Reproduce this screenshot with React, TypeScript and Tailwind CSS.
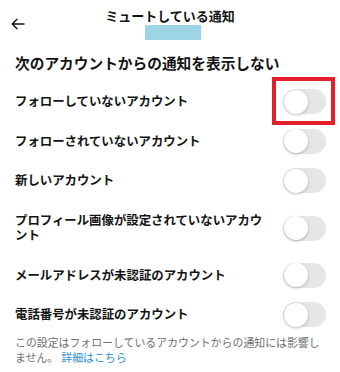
import React, { useState } from "react";

const rows = [
  "フォローしていないアカウント",
  "フォローされていないアカウント",
  "新しいアカウント",
  "プロフィール画像が設定されていないアカウント",
  "メールアドレスが未認証のアカウント",
  "電話番号が未認証のアカウント",
];

function Toggle({ on, onClick }: { on: boolean; onClick: () => void }) {
  return (
    <button
      type="button"
      onClick={onClick}
      className={`relative w-[43px] h-[25px] -my-[5px] shrink-0 rounded-full transition ${on ? "bg-[#1d9bf0]" : "bg-[#e6e6e9]"}`}
    >
      <span
        className={`absolute top-[0.5px] left-[0.5px] w-[24px] h-[24px] rounded-full bg-white shadow-[0_1px_3px_rgba(0,0,0,0.25)] transition ${on ? "translate-x-[18px]" : ""}`}
      />
    </button>
  );
}

export default function App() {
  const [state, setState] = useState<boolean[]>(rows.map(() => false));

  return (
    <main
      className="relative w-[340px] h-[372px] bg-white overflow-hidden text-[#141414]"
      style={{ fontFamily: '"Noto Sans CJK JP", "Noto Sans", sans-serif' }}
    >
      {/* header */}
      <header className="flex items-center pt-2 px-[11px]">
        <svg width="14" height="12" viewBox="0 0 14 12" fill="none" stroke="#111" strokeWidth={1.4} strokeLinecap="round" strokeLinejoin="round" className="shrink-0">
          <path d="M13 6H1.5M6 1.2L1.2 6L6 10.8" />
        </svg>
        <div className="flex-1 flex flex-col items-center pr-[14px]">
          <h1 className="text-[13px] leading-[16px] font-bold">ミュートしている通知</h1>
          <div className="w-[56px] h-[15px] bg-[#9dd5e7] mt-[1px] ml-[6px]" />
        </div>
      </header>

      <h2 className="px-[15px] mt-[13px] text-[14.7px] leading-[20px] font-bold">次のアカウントからの通知を表示しない</h2>

      <ul className="mt-[9px]">
        {rows.map((label, i) => (
          <li key={label} className="flex items-center pl-[15px] pr-[14px] py-3">
            <span className="flex-1 pr-[12px] text-[12.4px] leading-[15.5px] font-semibold">{label}</span>
            <Toggle on={state[i]} onClick={() => setState(state.map((v, j) => (j === i ? !v : v)))} />
          </li>
        ))}
      </ul>

      <p className="px-[15px] text-[10.9px] leading-[15px] text-[#6f6f6f]">
        この設定はフォローしているアカウントからの通知には影響しません。
        <a href="#" className="ml-[3px] text-[#2a8fd4]">詳細はこちら</a>
      </p>

      {/* annotation box */}
      <div className="absolute left-[272px] top-[77px] w-[63px] h-[48px] border-[4.5px] border-[#e3202a] pointer-events-none" />
    </main>
  );
}
